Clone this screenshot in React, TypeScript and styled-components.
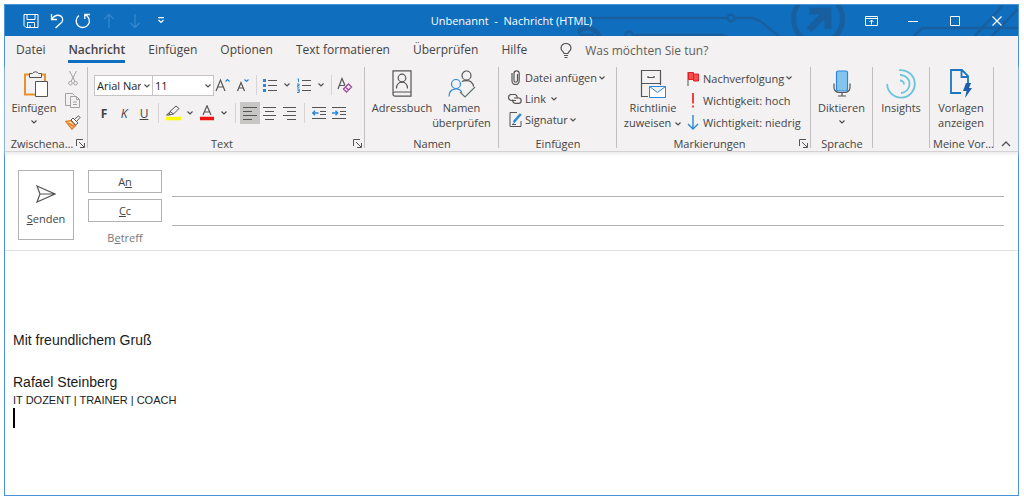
import React from 'react';
import styled, { createGlobalStyle, css } from 'styled-components';

const ink = '#444444';
const blue = '#106ebe';
const sky = '#2b88d8';

const GlobalStyle = createGlobalStyle`
  * { box-sizing: border-box; }
  body {
    margin: 0;
    background: #ffffff;
    color: ${ink};
    font-family: "Open Sans", "Noto Sans", sans-serif;
    font-size: 11px;
  }
  button, input, select { font: inherit; color: inherit; }
  button { border: 0; padding: 0; background: none; }
`;

const Window = styled.div`
  display: flex;
  flex-direction: column;
  min-height: calc(100vh - 9px);
  margin: 4px 5px 5px 4px;
  border: 1px solid #4a94d6;
`;

/* ---------- title bar ---------- */

const TitleBar = styled.header`
  position: relative;
  display: grid;
  grid-template-columns: 1fr auto 1fr;
  align-items: center;
  height: 31px;
  background: ${blue};
  color: #ffffff;
`;

const Circuit = styled.svg`
  position: absolute;
  right: 0;
  top: 0;
`;

const QuickAccess = styled.div`
  display: flex;
  padding-left: 13px;
`;

const QuickButton = styled.button<{ $dim?: boolean }>`
  display: flex;
  justify-content: center;
  align-items: center;
  width: 26px;
  height: 24px;
  opacity: ${p => (p.$dim ? 0.25 : 1)};
`;

const Title = styled.h1`
  position: relative;
  margin: 0;
  font-size: 11px;
  font-weight: 400;
  white-space: pre;
`;

const WindowControls = styled.div`
  position: relative;
  display: flex;
  justify-content: flex-end;
`;

const ControlButton = styled.button`
  display: flex;
  justify-content: center;
  align-items: center;
  width: 42px;
  height: 31px;
`;

/* ---------- tabs ---------- */

const Tabs = styled.nav`
  display: flex;
  align-items: center;
  gap: 23px;
  height: 29px;
  padding: 0 11px;
  background: #f3f1f1;
  font-size: 12px;
`;

const Tab = styled.button<{ $active?: boolean }>`
  height: 25px;
  border-bottom: 3px solid transparent;
  white-space: nowrap;
  ${p => p.$active && css`
    border-color: ${blue};
    font-weight: 600;
  `}
`;

const TellMe = styled.button`
  display: flex;
  align-items: center;
  gap: 13px;
  margin-left: 10px;
  color: #605e5c;
  white-space: nowrap;
`;

/* ---------- ribbon ---------- */

const Ribbon = styled.section`
  position: relative;
  display: flex;
  height: 87px;
  padding: 2px 0 3px;
  background: #f3f1f1;
  border-bottom: 1px solid #d4d2d2;
  box-shadow: 0 2px 3px #ececec;
`;

const Group = styled.div<{ $width: number }>`
  display: flex;
  flex-direction: column;
  flex: 0 0 ${p => p.$width}px;
  min-width: 0;
  border-right: 1px solid #c1bfbf;
`;

const GroupBody = styled.div<{ $pad?: number }>`
  display: flex;
  flex: 1;
  padding: 0 ${p => p.$pad ?? 0}px;
`;

const GroupFooter = styled.div`
  display: flex;
  align-items: center;
  height: 9px;
  padding: 0 2px 0 3px;
`;

const GroupLabel = styled.span`
  flex: 1;
  text-align: center;
  line-height: 9px;
  white-space: nowrap;
`;

const Launcher = styled.button`
  display: flex;
  align-items: center;
`;

const BigButton = styled.button<{ $width: number }>`
  display: flex;
  flex-direction: column;
  align-items: center;
  align-self: flex-start;
  width: ${p => p.$width}px;
  line-height: 15px;
  white-space: nowrap;
  svg { flex: none; }
  > svg { margin-top: 4px; }
`;

const BigIcon = styled.span`
  display: flex;
  align-items: center;
  height: 33px;
`;

const Stack = styled.div<{ $row: number }>`
  display: grid;
  grid-auto-rows: ${p => p.$row}px;
  align-content: start;
`;

const IconButton = styled.button<{ $on?: boolean }>`
  display: flex;
  justify-content: center;
  align-items: center;
  width: 20px;
  height: 22px;
  font-size: 12px;
  background: ${p => (p.$on ? '#c8c6c4' : 'none')};
`;

const SmallButton = styled.button`
  display: flex;
  align-items: center;
  gap: 1px;
  white-space: nowrap;
`;

const SmallIcon = styled.span`
  display: flex;
  justify-content: center;
  width: 18px;
`;

const TextTools = styled.div`
  display: flex;
  flex: 1;
  flex-direction: column;
  gap: 6px;
  padding: 7px 6px 0;
`;

const ToolRow = styled.div<{ $gap: number }>`
  display: flex;
  align-items: center;
  height: 22px;
  hr {
    flex: none;
    width: 1px;
    height: 20px;
    margin: 0 ${p => p.$gap}px;
    border: 0;
    background: #d6d4d4;
  }
`;

const DropArrow = styled.button`
  display: flex;
  justify-content: center;
  width: 14px;
`;

const Picker = styled.span<{ $width: number }>`
  position: relative;
  display: flex;
  width: ${p => p.$width}px;
  height: 21px;
  margin-right: -1px;
  background: #ffffff;
  border: 1px solid #c6c4c4;
  select {
    appearance: none;
    width: 100%;
    padding: 0 11px 0 2px;
    border: 0;
    background: none;
    color: #222222;
  }
  svg {
    position: absolute;
    right: 1px;
    top: 7px;
    pointer-events: none;
  }
`;

const Collapse = styled.button`
  align-self: flex-end;
  margin: 0 7px 0 auto;
  svg { display: block; }
`;

/* ---------- message header ---------- */

const Header = styled.section`
  display: flex;
  gap: 14px;
  padding: 16px 14px 0 13px;
  border-bottom: 1px solid #e1dfdf;
`;

const SendButton = styled.button`
  display: flex;
  flex-direction: column;
  justify-content: center;
  align-items: center;
  gap: 8px;
  width: 56px;
  height: 70px;
  margin: 2px 0 9px;
  border: 1px solid #b3b1b1;
`;

const Fields = styled.div`
  display: grid;
  flex: 1;
  grid-template-rows: 29px 29px 24px;
  align-content: start;
`;

const Field = styled.div`
  display: grid;
  grid-template-columns: 74px 1fr;
  gap: 10px;
`;

const FieldButton = styled.button`
  height: 23px;
  margin-top: 2px;
  border: 1px solid #b3b1b1;
`;

const FieldLabel = styled.label`
  line-height: 23px;
  text-align: center;
  color: #777777;
`;

const FieldInput = styled.input<{ $plain?: boolean }>`
  width: 100%;
  min-width: 0;
  border: 0;
  border-bottom: 1px solid ${p => (p.$plain ? 'transparent' : '#b3b1b1')};
  background: none;
  outline: none;
`;

/* ---------- message body ---------- */

const Message = styled.main`
  flex: 1;
  padding: 79px 8px 60px;
  color: #1b1b1b;
  font-family: "Liberation Sans Narrow", "Arial Narrow", "Liberation Sans", sans-serif;
  font-size: 14px;
  line-height: 21px;
  p { margin: 0; min-height: 21px; }
`;

const Role = styled.p`
  && { min-height: 15px; font-size: 11px; line-height: 15px; }
`;

const Caret = styled.div`
  width: 2px;
  height: 20px;
  background: #000000;
`;

/* ---------- icons ---------- */

type IconProps = { w: number; h: number; c?: string; sw?: number; children: React.ReactNode };
const Icon = ({ w, h, c = '#555555', sw = 1, children }: IconProps) => (
  <svg width={w} height={h} viewBox={`0 0 ${w} ${h}`} fill="none" stroke={c} strokeWidth={sw} aria-hidden="true">
    {children}
  </svg>
);

const Chevron = () => (
  <Icon w={8} h={6} sw={1.2} c="#505050"><path d="M1.5 1.5 4 4l2.500-2.500" /></Icon>
);

const LauncherIcon = () => (
  <Icon w={9} h={9}><path d="M.5 7V.5H7M3 3l5 5M8.500 4v4.500H4" /></Icon>
);

const Lines = ({ kind }: { kind: 'left' | 'center' | 'right' }) => {
  const d = {
    left: 'M0 1.500h14M0 5.500h9M0 9.500h14M0 13.500h9',
    center: 'M0 1.500h13M2 5.500h9M0 9.500h13M2 13.500h9',
    right: 'M0 1.500h13M4 5.500h9M0 9.500h13M4 13.500h9',
  }[kind];
  return <Icon w={14} h={15}><path d={d} /></Icon>;
};

const IndentIcon = ({ out }: { out?: boolean }) => (
  <Icon w={14} h={14}>
    <path d="M0 1.500h14M8 5.500h6M8 8.500h6M0 12.500h14" />
    <path stroke={sky} strokeWidth="1.400" d={out ? 'M6.500 7H.8M3 4.700.8 7 3 9.300' : 'M0 7h5.500M3.500 4.700 5.700 7 3.500 9.300'} />
  </Icon>
);

const Footer = ({ label, launcher }: { label: string; launcher?: boolean }) => (
  <GroupFooter>
    <GroupLabel>{label}</GroupLabel>
    {launcher && <Launcher aria-label={`${label} Optionen`}><LauncherIcon /></Launcher>}
  </GroupFooter>
);

const Drop = ({ label }: { label: string }) => <DropArrow aria-label={label}><Chevron /></DropArrow>;

const tabs = ['Datei', 'Nachricht', 'Einfügen', 'Optionen', 'Text formatieren', 'Überprüfen', 'Hilfe'];

export default function App() {
  return (
    <>
      <GlobalStyle />
      <Window>
        <TitleBar>
          <Circuit width="440" height="31" viewBox="0 0 440 31" fill="none" stroke="#185f9f" strokeWidth="2.500" aria-hidden="true">
            <path d="M8 13h142M158 13h16l8 3 20 16M56 30h88l6 2M335 32l9-9h96M396 32l29-32M413 32l27-28" />
            <circle cx="153" cy="13" r="3.500" />
            <circle cx="51" cy="30" r="3.500" />
            <circle cx="9" cy="36" r="13" strokeWidth="5" />
            <path d="M2 30h14M3 34h12" />
            <circle cx="240" cy="14" r="24.500" strokeWidth="5" />
            <path d="M231 6h19v18M249 7l-18 18" strokeWidth="7" />
          </Circuit>
          <QuickAccess>
            <QuickButton aria-label="Speichern">
              <Icon w={16} h={16} c="#ffffff"><path d="M1 1.500h14v13H3L1 12.500zM4 1.500v5h8v-5M4.500 14V9.500h7V14M7 12v2" /></Icon>
            </QuickButton>
            <QuickButton aria-label="Rückgängig">
              <Icon w={16} h={16} c="#ffffff" sw={1.300}><path d="M2.500 1v5.500H8M2.700 6.200C5 3 8 1.800 10.500 2.500c3 .8 4 4 2.500 6.500L6.500 15" /></Icon>
            </QuickButton>
            <QuickButton aria-label="Wiederholen">
              <Icon w={16} h={16} c="#ffffff" sw={1.300}><path d="M9.800 6V1.500H15M4 2.500a6.600 6.600 0 1 0 6-.8" /></Icon>
            </QuickButton>
            <QuickButton $dim aria-label="Vorheriges Element">
              <Icon w={12} h={16} c="#9fd0ff" sw={1.300}><path d="M6 15V1.500M1.500 6 6 1.500 10.500 6" /></Icon>
            </QuickButton>
            <QuickButton $dim aria-label="Nächstes Element">
              <Icon w={12} h={16} c="#9fd0ff" sw={1.300}><path d="M6 1v13.500M1.500 10 6 14.500 10.500 10" /></Icon>
            </QuickButton>
            <QuickButton aria-label="Symbolleiste anpassen">
              <Icon w={8} h={7} c="#ffffff" sw={1.200}><path d="M1 .7h6M1.500 3 4 5.500 6.500 3" /></Icon>
            </QuickButton>
          </QuickAccess>
          <Title>{'Unbenannt  -  Nachricht (HTML)'}</Title>
          <WindowControls>
            <ControlButton aria-label="Menüband-Anzeigeoptionen">
              <Icon w={13} h={10} c="#ffffff"><path d="M.5.5h12v9H.5zM.5 2.500h12M6.500 8.500v-4M4.500 6l2-2 2 2" /></Icon>
            </ControlButton>
            <ControlButton aria-label="Minimieren">
              <Icon w={10} h={10} c="#ffffff"><path d="M0 5.500h10" /></Icon>
            </ControlButton>
            <ControlButton aria-label="Maximieren">
              <Icon w={10} h={10} c="#ffffff"><path d="M.5.5h9v9h-9z" /></Icon>
            </ControlButton>
            <ControlButton aria-label="Schließen">
              <Icon w={10} h={10} c="#ffffff" sw={1.200}><path d="m.5.5 9 9M9.500.5l-9 9" /></Icon>
            </ControlButton>
          </WindowControls>
        </TitleBar>

        <Tabs>
          {tabs.map(t => <Tab key={t} $active={t === 'Nachricht'}>{t}</Tab>)}
          <TellMe>
            <Icon w={12} h={15} sw={1.200}><path d="M4 10.500C3.800 8.500 1 8 1 5a5 4.500 0 0 1 10 0c0 3-2.800 3.500-3 5.500zM4 12.500h4M4.500 14.500h3" /></Icon>
            Was möchten Sie tun?
          </TellMe>
        </Tabs>

        <Ribbon>
          <Group $width={83}>
            <GroupBody>
              <BigButton $width={58}>
                <BigIcon>
                  <Icon w={32} h={28}>
                    <g transform="translate(5 0)">
                      <path stroke="#e8912d" strokeWidth="2" d="M7 4.500H2v20h10M19 4.500h3V11" />
                      <path fill="#f3f1f1" d="M6.500 7.500v-4h3a3.500 3.500 0 0 1 6 0h3v4z" />
                      <path fill="#ffffff" d="M12.500 11.500h12v15h-12z" />
                    </g>
                  </Icon>
                </BigIcon>
                <span>Einfügen</span>
                <Chevron />
              </BigButton>
              <Stack $row={22}>
                <IconButton aria-label="Ausschneiden">
                  <Icon w={10} h={15} c="#a3a1a1"><path d="M1.500 0l5.500 10.500M8.500 0 3 10.500" /><circle cx="2.500" cy="12.200" r="1.800" /><circle cx="7.500" cy="12.200" r="1.800" /></Icon>
                </IconButton>
                <IconButton aria-label="Kopieren">
                  <Icon w={16} h={15} c="#a3a1a1"><path d="M5 12.500H.5V.5h7l2 2M5.500 3.500h6l3 3v8h-9zM11.500 3.500v3h3M8 9h4M8 11.500h4" /></Icon>
                </IconButton>
                <IconButton aria-label="Format übertragen">
                  <Icon w={16} h={15}>
                    <path stroke="#e8812d" fill="#f8dcae" strokeWidth="1.500" d="M1 6.500l5-1 4.500 5L7 14z" />
                    <path stroke="#e8812d" strokeWidth="1.500" d="M3 8l6 3.500" />
                    <path fill="#ffffff" d="M6 5l2-2 5 5-2.500 2zM9.500 4.500 13.500.8 15 2.500 11.500 6.500z" />
                  </Icon>
                </IconButton>
              </Stack>
            </GroupBody>
            <Footer label="Zwischena…" launcher />
          </Group>

          <Group $width={277}>
            <TextTools>
              <ToolRow $gap={3}>
                <Picker $width={59}>
                  <select aria-label="Schriftart"><option>Arial Narrow</option></select>
                  <Chevron />
                </Picker>
                <Picker $width={62}>
                  <select aria-label="Schriftgrad"><option>11</option></select>
                  <Chevron />
                </Picker>
                <IconButton aria-label="Schrift vergrößern">
                  <Icon w={16} h={16} sw={1.200}><path d="M1 14 5.500 3 10 14M2.500 10h6" /><path stroke={sky} d="M10.500 4.500l2-2 2 2" /></Icon>
                </IconButton>
                <IconButton aria-label="Schrift verkleinern">
                  <Icon w={14} h={16} sw={1.200}><path d="M1.500 14 5 5.500 8.500 14M2.700 11h4.600" /><path stroke={sky} d="M8.500 2.500l2 2 2-2" /></Icon>
                </IconButton>
                <hr />
                <IconButton aria-label="Aufzählung">
                  <Icon w={14} h={14}><path d="M5 2.500h9M5 7.500h9M5 12.500h9" /><path stroke={sky} strokeWidth="3" d="M0 2.500h3M0 7.500h3M0 12.500h3" /></Icon>
                </IconButton>
                <Drop label="Aufzählungszeichen wählen" />
                <IconButton aria-label="Nummerierung">
                  <Icon w={14} h={15}><path d="M5 2.500h9M5 7.500h9M5 12.500h9" /><path stroke={sky} d="M.5.9H1.500V4M0 6h2.200v1.500H.5V9.200h2M0 11h2.200v3.500H0M.5 12.700h2" /></Icon>
                </IconButton>
                <Drop label="Nummerierung wählen" />
                <hr />
                <IconButton aria-label="Formatierung löschen">
                  <Icon w={16} h={16} sw={1.200}><path d="M1 12 5 1.500l3 7M2.500 8.500h5" /><path stroke="#a349a4" strokeWidth="1.400" d="M6.500 12l5-5 3 3-5 5zM8.500 10l3 3" /></Icon>
                </IconButton>
              </ToolRow>
              <ToolRow $gap={4}>
                <IconButton aria-label="Fett"><b>F</b></IconButton>
                <IconButton aria-label="Kursiv"><i>K</i></IconButton>
                <IconButton aria-label="Unterstrichen"><u>U</u></IconButton>
                <hr />
                <IconButton aria-label="Texthervorhebungsfarbe">
                  <Icon w={16} h={16}><path d="M4 10l1-3.500L11 1l3 2.500L8.500 9zM5 6.500 8.500 9M4 10H1.500L4.500 7.500" /><path stroke="#ffff00" strokeWidth="3.500" d="M1 13.500h15" /></Icon>
                </IconButton>
                <Drop label="Hervorhebungsfarbe wählen" />
                <IconButton aria-label="Schriftfarbe">
                  <Icon w={16} h={16} sw={1.200}><path d="M4 10 8 .8 12 10M5.300 7h5.400" /><path stroke="#f01414" strokeWidth="3.500" d="M1 13.500h14" /></Icon>
                </IconButton>
                <Drop label="Schriftfarbe wählen" />
                <hr />
                <IconButton $on aria-label="Linksbündig"><Lines kind="left" /></IconButton>
                <IconButton aria-label="Zentriert"><Lines kind="center" /></IconButton>
                <IconButton aria-label="Rechtsbündig"><Lines kind="right" /></IconButton>
                <hr />
                <IconButton aria-label="Einzug verkleinern"><IndentIcon out /></IconButton>
                <IconButton aria-label="Einzug vergrößern"><IndentIcon /></IconButton>
              </ToolRow>
            </TextTools>
            <Footer label="Text" launcher />
          </Group>

          <Group $width={134}>
            <GroupBody $pad={7}>
              <BigButton $width={60}>
                <BigIcon>
                  <Icon w={20} h={27} sw={1.200}>
                    <path d="M1 .8h18v25.400H3a2 2 0 0 1-2-2zM1 24a2 2 0 0 1 2-2h16M1 1v23" />
                    <circle cx="10" cy="8" r="3.800" /><path d="M4.500 18.500c0-8.500 11-8.500 11 0" />
                  </Icon>
                </BigIcon>
                <span>Adressbuch</span>
              </BigButton>
              <BigButton $width={60}>
                <BigIcon>
                  <Icon w={28} h={28} sw={1.200}>
                    <circle cx="18.500" cy="5.500" r="4.500" /><path d="M14 11.500c1-1 8-1.500 9 .5 2 1.500 2.500 3 2.500 4.500" />
                    <circle cx="8" cy="14" r="4.500" stroke={sky} /><path stroke={sky} d="M1 26.500c0-9 10-9.500 13-4" />
                    <path stroke="#5b7568" d="M12 22l5 5 10-10" />
                  </Icon>
                </BigIcon>
                <span>Namen</span><span>überprüfen</span>
              </BigButton>
            </GroupBody>
            <Footer label="Namen" />
          </Group>

          <Group $width={118}>
            <GroupBody $pad={7}>
              <Stack $row={21}>
                <SmallButton>
                  <SmallIcon><Icon w={9} h={15} sw={1.200}><path d="M6.500 4v6.500a1.500 1.500 0 0 1-3.500 0V3.500a2.500 2.500 0 0 1 5.200 0V11a3.500 3.500 0 0 1-7.200 0V3" /></Icon></SmallIcon>
                  Datei anfügen<Chevron />
                </SmallButton>
                <SmallButton>
                  <SmallIcon><Icon w={16} h={10} sw={1.200}><path d="M9 6.500H4.500a3 3 0 0 1 0-6h3a3 3 0 0 1 2.500 4M7 4h4.500a2.700 2.700 0 0 1 0 5.400h-3A2.700 2.700 0 0 1 6 5.500" /></Icon></SmallIcon>
                  Link<Drop label="Zuletzt verwendete Links" />
                </SmallButton>
                <SmallButton>
                  <SmallIcon><Icon w={13} h={15}><path d="M8 .5H1v14h11V9M3 12.500h4" /><path stroke={sky} strokeWidth="2.500" d="M11.800 2 4.800 10" /><path stroke={sky} d="M6 10l-2.500 2" /></Icon></SmallIcon>
                  Signatur<Chevron />
                </SmallButton>
              </Stack>
            </GroupBody>
            <Footer label="Einfügen" />
          </Group>

          <Group $width={194}>
            <GroupBody $pad={5}>
              <BigButton $width={62}>
                <BigIcon>
                  <Icon w={26} h={28}>
                    <path d="M8 26.500H1.500V.5h19V15M1.500 13.500h19M8 6v1.500h6V6" strokeWidth="1.200" />
                    <path fill="#ffffff" stroke={sky} d="M9.500 16.500h16v11h-16zl8 6 8-6" />
                  </Icon>
                </BigIcon>
                <span>Richtlinie</span><span>zuweisen <Chevron /></span>
              </BigButton>
              <Stack $row={22}>
                <SmallButton>
                  <SmallIcon><Icon w={12} h={15}><path d="M1 1v14" /><path fill="#f25050" stroke="#e02020" d="M1.500 1.500h5v7h-5zM6.500 3h5v7h-5z" /></Icon></SmallIcon>
                  Nachverfolgung<Chevron />
                </SmallButton>
                <SmallButton>
                  <SmallIcon><Icon w={4} h={15} c="#f04040" sw={2}><path d="M2 0v10.500M2 12.500v2" /></Icon></SmallIcon>
                  Wichtigkeit: hoch
                </SmallButton>
                <SmallButton>
                  <SmallIcon><Icon w={12} h={15} c={sky} sw={1.400}><path d="M6 0v14M1 9l5 5 5-5" /></Icon></SmallIcon>
                  Wichtigkeit: niedrig
                </SmallButton>
              </Stack>
            </GroupBody>
            <Footer label="Markierungen" launcher />
          </Group>

          <Group $width={62}>
            <GroupBody>
              <BigButton $width={61}>
                <BigIcon>
                  <Icon w={18} h={27} sw={1.200}>
                    <rect x="3.500" y="1" width="11" height="20" rx="1.500" fill="#83c3ec" stroke={sky} />
                    <path d="M1 13.500v4a5 5 0 0 0 5 5h6a5 5 0 0 0 5-5v-4M9 22.500V26M5 26h8" />
                  </Icon>
                </BigIcon>
                <span>Diktieren</span><Chevron />
              </BigButton>
            </GroupBody>
            <Footer label="Sprache" />
          </Group>

          <Group $width={57}>
            <GroupBody>
              <BigButton $width={56}>
                <BigIcon>
                  <Icon w={30} h={30} c="#6cc5dc" sw={1.800}>
                    <path d="M13 1.200A13.800 13.800 0 1 1 1.200 15M14 6a9 9 0 1 1 1 18M14 11.500a4 4 0 0 1 4 4" />
                  </Icon>
                </BigIcon>
                <span>Insights</span>
              </BigButton>
            </GroupBody>
          </Group>

          <Group $width={64}>
            <GroupBody>
              <BigButton $width={62}>
                <BigIcon>
                  <Icon w={24} h={29} c="#1b76c4" sw={1.800}>
                    <path d="M12 24H2V1h11l6 6v7M12.500 1v7H19" />
                    <path fill="#1b5fae" stroke="none" d="M17 14h5l-2 5h3l-7 10 1.500-7H14z" />
                  </Icon>
                </BigIcon>
                <span>Vorlagen</span><span>anzeigen</span>
              </BigButton>
            </GroupBody>
            <Footer label="Meine Vor…" />
          </Group>
          <Collapse aria-label="Menüband reduzieren">
            <Icon w={10} h={8} sw={1.300}><path d="M1 6l4-4 4 4" /></Icon>
          </Collapse>
        </Ribbon>

        <Header>
          <SendButton>
            <Icon w={20} h={18} sw={1.200}><path d="M1 1l18 8L1 17l3-8zM4 9h15" /></Icon>
            <span><u>S</u>enden</span>
          </SendButton>
          <Fields>
            <Field>
              <FieldButton>A<u>n</u></FieldButton>
              <FieldInput aria-label="An" />
            </Field>
            <Field>
              <FieldButton><u>C</u>c</FieldButton>
              <FieldInput aria-label="Cc" />
            </Field>
            <Field>
              <FieldLabel htmlFor="subject">B<u>e</u>treff</FieldLabel>
              <FieldInput id="subject" $plain />
            </Field>
          </Fields>
        </Header>

        <Message>
          <p>Mit freundlichem Gruß</p>
          <p />
          <p>Rafael Steinberg</p>
          <Role>IT DOZENT | TRAINER | COACH</Role>
          <Caret />
        </Message>
      </Window>
    </>
  );
}
